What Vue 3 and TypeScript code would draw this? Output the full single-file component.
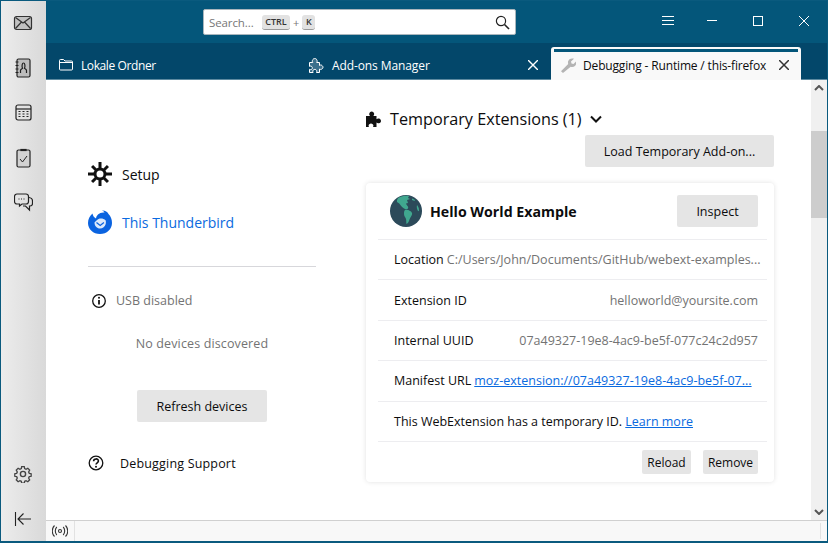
<script setup lang="ts">
interface InfoRow {
  label: string
  value: string
  link?: boolean
  left?: boolean
}

const rows: InfoRow[] = [
  { label: 'Location', value: 'C:/Users/John/Documents/GitHub/webext-examples...', left: true },
  { label: 'Extension ID', value: 'helloworld@yoursite.com' },
  { label: 'Internal UUID', value: '07a49327-19e8-4ac9-be5f-077c24c2d957' },
  { label: 'Manifest URL', value: 'moz-extension://07a49327-19e8-4ac9-be5f-07...', link: true, left: true },
]
</script>

<template>
  <div class="window">
    <aside class="spaces">
      <div class="spaces-top">
        <button class="space">
          <svg width="20" height="16" viewBox="0 0 20 16" fill="none" stroke="#333" stroke-width="1.200">
            <rect x="1.500" y="1.500" width="17" height="13" rx="2" fill="#c2c2c2" />
            <path d="M2.500 2.500l7.500 5.500 7.500-5.500M2.500 13.500l6-6.500M17.500 13.500l-6-6.500" />
          </svg>
        </button>
        <button class="space">
          <svg width="16" height="20" viewBox="0 0 16 20" fill="none" stroke="#222" stroke-width="1.200">
            <rect x="2" y="1" width="13" height="18" rx="1.500" fill="#bdbdbd" />
            <path d="M.5 4h3M.5 7.500h3M.5 11h3M.5 14.500h3" />
            <path d="M5.500 15v-2.500c0-1.200 1.300-1.600 2-2.200-.9-1.800-.4-5.300 1-5.300s1.900 3.500 1 5.300c.7.600 2 1 2 2.200V15" />
          </svg>
        </button>
        <button class="space">
          <svg width="17" height="17" viewBox="0 0 17 17" fill="none" stroke="#222" stroke-width="1.200">
            <rect x="1" y="1" width="15" height="15" rx="2" />
            <path d="M1 5h15" />
            <path d="M3.500 7.500h2M7.500 7.500h2M11.500 7.500h2M3.500 10h2M7.500 10h2M11.500 10h2M3.500 12.500h2M7.500 12.500h2M11.500 12.500h2" stroke-width="1" />
          </svg>
        </button>
        <button class="space">
          <svg width="15" height="20" viewBox="0 0 15 20" fill="none" stroke="#222" stroke-width="1.200">
            <rect x="1" y="2" width="13" height="17" rx="1.500" fill="#d2d2d2" />
            <path d="M5 2.500h5v-1H5z" fill="#222" />
            <path d="M4 11l2.500 3 4.500-6" stroke-width="1" />
          </svg>
        </button>
        <button class="space">
          <svg width="19" height="19" viewBox="0 0 19 19" fill="none" stroke="#222" stroke-width="1.200">
            <path d="M3 1h9a2.500 2.500 0 0 1 2.500 2.500v5A2.500 2.500 0 0 1 12 11H8l-2.500 2v-2H3A2.500 2.500 0 0 1 .5 8.500v-5A2.500 2.500 0 0 1 3 1z" />
            <path d="M15 4.500c2 .3 3.500 1.500 3.500 3.500v2.500c0 1.500-1 2.500-2.500 2.500h-.5v4l-4-4H9" />
            <path d="M4.500 6h1M7 6h1M9.500 6h1" />
          </svg>
        </button>
      </div>
      <div class="spaces-bottom">
        <button class="space">
          <svg width="18" height="18" viewBox="0 0 18 18" fill="none" stroke="#444" stroke-width="1.400">
            <circle cx="9" cy="9" r="2.600" />
            <path d="M7.600 1.200h2.800l.4 2.100 1.500.7 1.900-1.100 2 2-1.100 1.900.7 1.500 2 .4v2.800l-2 .4-.7 1.500 1.100 1.900-2 2-1.900-1.100-1.500.7-.4 2h-2.800l-.4-2-1.500-.7-1.900 1.100-2-2 1.100-1.900-.7-1.500-2-.4v-2.800l2-.4.7-1.500-1.100-1.900 2-2 1.900 1.100 1.500-.7z" transform="translate(.6 .6) scale(.93)" />
          </svg>
        </button>
        <button class="space">
          <svg width="18" height="16" viewBox="0 0 18 16" fill="none" stroke="#222" stroke-width="1.100">
            <path d="M1.500 1v14M17 8H4M9.500 2.500L4 8l5.500 5.500" />
          </svg>
        </button>
      </div>
    </aside>

    <div class="main">
      <header class="titlebar">
        <div class="search">
          <span class="search-hint">Search...</span>
          <kbd class="key key-ctrl">CTRL</kbd>
          <span class="plus">+</span>
          <kbd class="key">K</kbd>
          <svg class="search-icon" width="15" height="15" viewBox="0 0 15 15" fill="none" stroke="#222" stroke-width="1.200">
            <circle cx="6" cy="6" r="4.600" />
            <path d="M9.500 9.500l4.500 4.500" stroke-width="1.600" />
          </svg>
        </div>
        <div class="controls">
          <svg class="menu-icon" width="12" height="10" viewBox="0 0 12 10" stroke="#fff"><path d="M0 .5h12M0 4.500h12M0 8.500h12" /></svg>
          <svg width="10" height="10" viewBox="0 0 10 10" stroke="#fff"><path d="M0 4.500h10" /></svg>
          <svg width="10" height="10" viewBox="0 0 10 10" stroke="#fff" fill="none"><rect x=".5" y=".5" width="9" height="9" /></svg>
          <svg width="10" height="10" viewBox="0 0 10 10" stroke="#fff"><path d="M0 0l10 10M10 0L0 10" /></svg>
        </div>
      </header>

      <nav class="tabs">
        <div class="tab tab-folder">
          <svg width="14" height="12" viewBox="0 0 14 12" fill="none" stroke="#fff">
            <path d="M.5 10V1.500a1 1 0 0 1 1-1h3l1.500 1.500h6.500a1 1 0 0 1 1 1V10a1 1 0 0 1-1 1h-11a1 1 0 0 1-1-1zM.5 3.500h13" />
          </svg>
          <span>Lokale Ordner</span>
        </div>
        <div class="tab tab-addons">
          <svg width="16" height="16" viewBox="0 0 16 16" fill="#3a6f8c" stroke="#fff">
            <path d="M1.500 5.500h3.300c-.8-1-.6-2 0-2.600-.1-1.600 3.900-1.900 3.900 0 .5.600.7 1.600 0 2.600h2.800v3c1-.8 1.800-.6 2.500 0 1.300.8 1.300 2.800 0 3.400-.7.600-1.500.8-2.500.1v3.500H8.500c.5-1 .4-2-.3-2.600-1.200-1-3.200-.5-3.400 1-.1.600 0 1 .3 1.600H1.500v-3.200c1 .6 2 .4 2.500-.3.700-1 .2-2.600-1-2.900-.6-.1-1 0-1.500.3z" />
          </svg>
          <span>Add-ons Manager</span>
          <svg class="tab-close" width="10" height="10" viewBox="0 0 10 10" stroke="#fff" stroke-width="1.400"><path d="M0 0l10 10M10 0L0 10" /></svg>
        </div>
        <div class="tab tab-active">
          <svg width="15" height="15" viewBox="0 0 15 15" fill="#b4b4b4">
            <path d="M0 13.200L7.200 6c-.6-2 0-3.600 1.300-4.700C9.800.3 11.500.2 13 .8l-3 2.700.5 2 2 .6 2.800-2.800c.5 1.700 0 3.300-1.100 4.400-1.200 1.100-2.800 1.500-4.500 1L2 15z" />
          </svg>
          <span>Debugging - Runtime / this-firefox</span>
          <svg class="tab-close" width="10" height="10" viewBox="0 0 10 10" stroke="#333" stroke-width="1.500"><path d="M0 0l10 10M10 0L0 10" /></svg>
        </div>
      </nav>

      <div class="body">
        <div class="page">
          <section class="sidebar">
            <div class="nav-item">
              <svg width="24" height="24" viewBox="0 0 24 24" fill="#111">
                <path d="M12 5.500a6.500 6.500 0 1 0 0 13 6.500 6.500 0 0 0 0-13zm0 3a3.500 3.500 0 1 1 0 7 3.500 3.500 0 0 1 0-7z" fill-rule="evenodd" />
                <path d="M10.500 0h3v6h-3zM10.500 18h3v6h-3zM0 10.500h6v3H0zM18 10.500h6v3h-6z" />
                <path d="M3 5.100L5.100 3l4 4L7 9.100zM14.900 17l2.100-2.100 4 4-2.100 2.100zM3 18.900l4-4L9.100 17l-4 4zM14.900 7l4-4L21 5.100l-4 4z" />
              </svg>
              <span>Setup</span>
            </div>
            <div class="nav-item nav-active">
              <svg width="24" height="24" viewBox="0 0 24 24">
                <path d="M4.500 3.500C1.700 6 0 9 0 13c0 6.200 5.200 11 12 11s12-4.800 12-11c0-3.700-1.300-6.800-3.500-9C19.500 1.800 17 .3 14 .5c1.100.5 2 1.100 2.600 2-2.300-.4-4.900.3-6.600 2-1.200 1.100-1.800 2.500-2 4C6 7.500 4.800 5.800 4.500 3.500z" fill="#0a63e0" />
                <path d="M6.500 12.500c1.200-1 2.700-3 4.500-3.700 1.800-.7 4.800-.4 6.600 1.500.4 1 .4 2.400.1 3.700-.6 2.700-3 4.500-5.700 4.500-3 0-5.500-2.500-5.500-6z" fill="#dbe9fb" />
                <path d="M8.500 12.500l3.700 3 3.700-3" stroke="#0a63e0" stroke-width="1.300" fill="none" />
              </svg>
              <span>This Thunderbird</span>
            </div>
            <hr class="divider" />
            <div class="usb">
              <svg width="16" height="16" viewBox="0 0 16 16" fill="none" stroke="#111" stroke-width="1.300">
                <circle cx="8" cy="8" r="6.300" />
                <path d="M8 7v4.500" stroke-width="1.800" />
                <circle cx="8" cy="4.800" r="1" fill="#111" stroke="none" />
              </svg>
              <span>USB disabled</span>
            </div>
            <p class="no-devices">No devices discovered</p>
            <button class="btn btn-refresh">Refresh devices</button>
            <div class="support">
              <svg width="16" height="16" viewBox="0 0 16 16" fill="none" stroke="#111" stroke-width="1.300">
                <circle cx="8" cy="8" r="6.800" />
                <path d="M5.600 6.200c0-3 4.800-3 4.800-.2 0 1.800-2.400 1.800-2.400 3.600" stroke-width="1.600" />
                <circle cx="8" cy="11.800" r="1" fill="#111" stroke="none" />
              </svg>
              <span>Debugging Support</span>
            </div>
          </section>

          <section class="content">
            <h2 class="heading">
              <svg width="16" height="16" viewBox="0 0 16 16" fill="#111">
                <path d="M0 5h4c-.7-.8-.9-1.500-.7-2.400C3.600 1.200 4.700.5 5.700.5s2.100.7 2.400 2.100c.2.900 0 1.600-.7 2.400h3.100v3.200c.8-.7 1.500-.9 2.400-.7 1.400.3 2.100 1.400 2.100 2.400s-.7 2.100-2.100 2.400c-.9.200-1.600 0-2.400-.7V16H7c.7-.9.500-2.200-.3-2.800-.9-.8-2.500-.8-3.400 0-.8.600-1 1.900-.3 2.800H0z" />
              </svg>
              <span>Temporary Extensions (1)</span>
              <svg class="chevron" width="12" height="8" viewBox="0 0 12 8" fill="none" stroke="#111" stroke-width="2">
                <path d="M1 1.500l5 5 5-5" />
              </svg>
            </h2>
            <div class="load-row">
              <button class="btn btn-load">Load Temporary Add-on...</button>
            </div>

            <article class="card">
              <div class="card-head">
                <svg width="32" height="32" viewBox="0 0 32 32">
                  <circle cx="16" cy="16" r="16" fill="#2c4a5a" />
                  <path d="M9 2.500c3-1.500 7-2 10-1.500l-1 2 2 1-3 1 1 3-2 .500c.5 2 3 3 2 5-1 1.500-3 .5-4 0-2-1-3-3-4-4-1-1.500-2-2-3-2.500C6.500 5 7.500 3.500 9 2.500z" fill="#40a78f" />
                  <path d="M15 15c2-.5 3.500 0 5 1 1.500.5 2.500 2 2 3.500-.5 2-2 3-2.500 5-.5 1.500-1.500 4-3 4.500-.5-1.500 0-3-.5-5-.5-1.500-2-3-2-5 0-2 0-3 1-4z" fill="#40a78f" />
                  <path d="M27 10c1 1 2 3 2 5s-1 1-1.500 0c-.5-1-1-3-.5-5zM22 3.500c2 .5 3 1.500 3 2s-2 0-3-.5z" fill="#40a78f" />
                </svg>
                <h3 class="card-title">Hello World Example</h3>
                <button class="btn btn-inspect">Inspect</button>
              </div>
              <div v-for="row in rows" :key="row.label" class="row" :class="{ 'row-left': row.left }">
                <span class="row-label">{{ row.label }}</span>
                <a v-if="row.link" class="link row-value">{{ row.value }}</a>
                <span v-else class="row-value">{{ row.value }}</span>
              </div>
              <div class="row notice">
                <span>This WebExtension has a temporary ID. <a class="link">Learn more</a></span>
              </div>
              <div class="card-foot">
                <button class="btn btn-small">Reload</button>
                <button class="btn btn-small">Remove</button>
              </div>
            </article>
          </section>
        </div>

        <div class="scrollbar">
          <svg width="10" height="6" viewBox="0 0 10 6" fill="none" stroke="#555" stroke-width="2"><path d="M1 5l4-4 4 4" /></svg>
          <div class="track"><div class="thumb"></div></div>
          <svg width="10" height="6" viewBox="0 0 10 6" fill="none" stroke="#555" stroke-width="2"><path d="M1 1l4 4 4-4" /></svg>
        </div>
      </div>

      <footer class="status">
        <div class="status-radio">
          <svg width="16" height="12" viewBox="0 0 16 12" fill="none" stroke="#333" stroke-width="1.100">
            <circle cx="8" cy="6" r="1.500" />
            <path d="M4.800 2c-2 2-2 6 0 8M11.200 2c2 2 2 6 0 8M2.500 .5c-3 3-3 8 0 11M13.500 .5c3 3 3 8 0 11" />
          </svg>
        </div>
        <div class="status-end"></div>
      </footer>
    </div>
  </div>
</template>

<style>
html,
body {
  margin: 0;
  overflow: hidden;
}
</style>

<style scoped>
.window {
  display: flex;
  width: 828px;
  height: 543px;
  box-sizing: border-box;
  border: 1px solid #0a5a7e;
  border-bottom-width: 2px;
  background: #fff;
  color: #0c0c0d;
  font-family: "Open Sans", "Noto Sans", sans-serif;
  font-size: 12.5px;
}

button {
  font-family: inherit;
}

.spaces {
  width: 45px;
  flex: none;
  display: flex;
  flex-direction: column;
  justify-content: space-between;
  background: linear-gradient(to right, #ececec, #d9d9d9);
}

.spaces-top {
  margin-top: -1px;
}

.space {
  display: flex;
  align-items: center;
  justify-content: center;
  width: 100%;
  height: 45px;
  padding: 0 1px 0 0;
  border: 0;
  background: none;
}

.main {
  flex: 1;
  min-width: 0;
  display: flex;
  flex-direction: column;
}

.titlebar {
  height: 42px;
  flex: none;
  display: flex;
  align-items: center;
  background: #04567a;
}

.search {
  display: flex;
  align-items: center;
  width: 313px;
  height: 26px;
  box-sizing: border-box;
  margin-left: 157px;
  padding: 0 5px;
  border: 1px solid #a9b6bd;
  border-radius: 2px;
  background: #fff;
  color: #777;
}

.search-hint {
  width: 53px;
  font-size: 11.5px;
  letter-spacing: -0.1px;
}

.key {
  display: inline-flex;
  justify-content: center;
  min-width: 13px;
  height: 14px;
  line-height: 14px;
  padding: 0;
  border-radius: 3px;
  border-bottom: 1px solid #999;
  background: #e2e2e2;
  color: #333;
  font-family: inherit;
  font-size: 9px;
  font-weight: 600;
}

.key-ctrl {
  width: 28px;
}

.plus {
  margin: 0 3px 0 3px;
  font-size: 11px;
}

.search-icon {
  margin-left: auto;
}

.controls {
  display: flex;
  align-items: center;
  gap: 36px;
  margin: 0 0 2px 146px;
}

.menu-icon {
  margin-right: -3px;
}

.tabs {
  height: 37px;
  flex: none;
  display: flex;
  align-items: flex-end;
  background: #03476a;
  border-bottom: 1px solid #5d8aa0;
  box-sizing: border-box;
  color: #fff;
}

.tab {
  display: flex;
  align-items: center;
  height: 36px;
  padding-top: 8px;
  box-sizing: border-box;
  font-size: 12px;
  letter-spacing: -0.1px;
}

.tab span {
  white-space: nowrap;
}

.tab svg {
  flex: none;
}

.tab-folder {
  width: 252px;
  padding-left: 13px;
  gap: 8px;
  letter-spacing: -0.4px;
}

.tab-addons {
  width: 253px;
  padding-right: 13px;
  padding-left: 10px;
  gap: 8px;
}

.tab-close {
  margin-left: auto;
}

.tab-active {
  width: 250px;
  height: 33px;
  margin-bottom: -1px;
  padding: 3px 12px 0 10px;
  gap: 7px;
  letter-spacing: -0.16px;
  border-radius: 3px 3px 0 0;
  background: #f9f9f9;
  color: #0c0c0d;
  position: relative;
}

.tab-active::before {
  content: "";
  position: absolute;
  left: 3px;
  right: 3px;
  top: 2px;
  height: 3px;
  background: #04567a;
}

.body {
  flex: 1;
  min-height: 0;
  display: flex;
}

.page {
  flex: 1;
  display: flex;
  gap: 50px;
  padding: 30px 36px 0 42px;
  min-width: 0;
}

.sidebar {
  width: 228px;
  flex: none;
  padding-top: 49px;
}

.nav-item {
  display: flex;
  align-items: center;
  gap: 10px;
  height: 30px;
  margin-bottom: 18px;
  font-size: 14px;
}

.nav-active {
  color: #0a6ae0;
}

.divider {
  height: 1px;
  margin: 29px 0 0;
  border: 0;
  background: #d7d7db;
}

.usb {
  display: flex;
  align-items: center;
  gap: 9px;
  margin-top: 25px;
  padding-left: 3px;
  color: #737373;
}

.no-devices {
  margin: 26px 0 0;
  color: #737373;
  text-align: center;
  letter-spacing: 0.13px;
}

.btn {
  border: 0;
  border-radius: 2px;
  background: #e5e5e5;
  color: #0c0c0d;
  font-size: 12.5px;
  padding: 0;
}

.btn-refresh {
  display: block;
  width: 130px;
  height: 32px;
  margin: 38px auto 0;
}

.support {
  display: flex;
  align-items: center;
  gap: 16px;
  margin-top: 32px;
  height: 18px;
  letter-spacing: 0.18px;
}

.content {
  width: 408px;
  flex: none;
}

.heading {
  display: flex;
  align-items: center;
  height: 18px;
  margin: 0;
  font-size: 16.2px;
  font-weight: 500;
  gap: 8px;
}

.load-row {
  display: flex;
  justify-content: flex-end;
  margin-top: 7px;
}

.btn-load {
  width: 189px;
  height: 32px;
}

.card {
  margin-top: 16px;
  border-radius: 4px;
  background: #fff;
  box-shadow: 0 0 5px rgba(12, 12, 13, 0.12);
  padding: 0 7px 0 12px;
  height: 299px;
  box-sizing: border-box;
}

.card-head {
  display: flex;
  align-items: center;
  height: 56px;
  padding: 0 9px 0 12px;
  gap: 8px;
}

.card-title {
  margin: 0;
  font-size: 14.2px;
  font-weight: 700;
}

.btn-inspect {
  width: 81px;
  height: 32px;
  margin-left: auto;
}

.row {
  display: flex;
  align-items: center;
  justify-content: space-between;
  height: 40.4px;
  padding: 0 9px 0 16px;
  border-top: 1px solid #ededf0;
  box-sizing: border-box;
}

.row-value {
  color: #737373;
  white-space: nowrap;
}

.row-left {
  justify-content: flex-start;
  gap: 3px;
}

.link.row-value,
.link {
  color: #0a6ae0;
  text-decoration: underline;
}

.card-foot {
  display: flex;
  justify-content: flex-end;
  align-items: center;
  gap: 12px;
  height: 41px;
  padding-right: 9px;
  border-top: 1px solid #ededf0;
}

.btn-small {
  width: 49px;
  height: 24px;
  font-size: 12px;
}

.btn-small:last-child {
  width: 55px;
}

.scrollbar {
  width: 16px;
  flex: none;
  display: flex;
  flex-direction: column;
  align-items: center;
  background: #f0f0f0;
  padding: 5px 0;
  box-sizing: border-box;
}

.track {
  flex: 1;
  width: 100%;
  padding-top: 40px;
}

.thumb {
  height: 87px;
  background: #cdcdcd;
}

.status {
  height: 21px;
  flex: none;
  display: flex;
  align-items: center;
  justify-content: space-between;
  border-top: 1px solid #d0d0d0;
  background: #f8f8f8;
  box-sizing: border-box;
}

.status-radio {
  display: flex;
  align-items: center;
  justify-content: center;
  width: 28px;
  height: 100%;
  border-right: 1px solid #e2e2e2;
}

.status-end {
  width: 6px;
  height: 16px;
  border-left: 1px solid #e2e2e2;
}
</style>
